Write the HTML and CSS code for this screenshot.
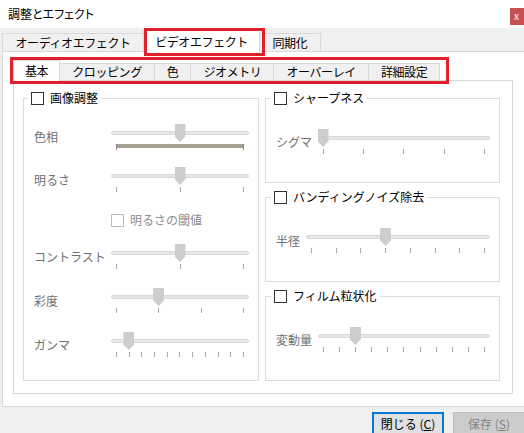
FILE: index.html
```html
<!DOCTYPE html>
<html lang="ja">
<head>
<meta charset="utf-8">
<title>調整とエフェクト</title>
<link rel="stylesheet" href="styles.css">
</head>
<body>
<div class="window">
  <div class="titlebar">
    <span class="title">調整とエフェクト</span>
    <span class="close">x</span>
  </div>

  <div class="tabs outer-tabs">
    <div class="tab">オーディオエフェクト</div>
    <div class="tab active">ビデオエフェクト</div>
    <div class="tab">同期化</div>
  </div>

  <div class="outer-pane">
    <div class="tabs inner-tabs">
      <div class="tab active">基本</div>
      <div class="tab">クロッピング</div>
      <div class="tab">色</div>
      <div class="tab">ジオメトリ</div>
      <div class="tab">オーバーレイ</div>
      <div class="tab">詳細設定</div>
    </div>

    <div class="inner-pane">
      <fieldset class="group group-left">
        <legend><span class="cb"></span>画像調整</legend>

        <div class="row">
          <span class="label">色相</span>
          <div class="slider">
            <div class="track"></div>
            <div class="hue-bar"></div>
            <div class="thumb" style="--v:0.5"></div>
          </div>
        </div>

        <div class="row">
          <span class="label">明るさ</span>
          <div class="slider">
            <div class="track"></div>
            <div class="ticks"><i></i><i></i><i></i></div>
            <div class="thumb" style="--v:0.5"></div>
          </div>
        </div>

        <div class="cb-row">
          <span class="cb disabled"></span>
          <span class="cb-text">明るさの閾値</span>
        </div>

        <div class="row">
          <span class="label">コントラスト</span>
          <div class="slider">
            <div class="track"></div>
            <div class="ticks"><i></i><i></i><i></i></div>
            <div class="thumb" style="--v:0.5"></div>
          </div>
        </div>

        <div class="row late">
          <span class="label">彩度</span>
          <div class="slider">
            <div class="track"></div>
            <div class="ticks"><i></i><i></i><i></i><i></i></div>
            <div class="thumb" style="--v:0.3333"></div>
          </div>
        </div>

        <div class="row late">
          <span class="label">ガンマ</span>
          <div class="slider">
            <div class="track"></div>
            <div class="ticks"><i></i><i></i><i></i><i></i><i></i><i></i><i></i><i></i><i></i><i></i><i></i></div>
            <div class="thumb" style="--v:0.1"></div>
          </div>
        </div>
      </fieldset>

      <div class="col-right">
        <fieldset class="group group-right">
          <legend><span class="cb"></span>シャープネス</legend>
          <div class="row">
            <span class="label">シグマ</span>
            <div class="slider">
              <div class="track"></div>
              <div class="ticks"><i></i><i></i><i></i><i></i><i></i></div>
              <div class="thumb" style="--v:0"></div>
            </div>
          </div>
        </fieldset>

        <fieldset class="group group-right">
          <legend><span class="cb"></span>バンディングノイズ除去</legend>
          <div class="row">
            <span class="label">半径</span>
            <div class="slider">
              <div class="track"></div>
              <div class="ticks"><i></i><i></i><i></i><i></i><i></i><i></i><i></i><i></i></div>
              <div class="thumb" style="--v:0.4286"></div>
            </div>
          </div>
        </fieldset>

        <fieldset class="group group-right">
          <legend><span class="cb"></span>フィルム粒状化</legend>
          <div class="row">
            <span class="label">変動量</span>
            <div class="slider">
              <div class="track"></div>
              <div class="ticks"><i></i><i></i><i></i><i></i><i></i><i></i><i></i><i></i><i></i><i></i><i></i></div>
              <div class="thumb" style="--v:0.2"></div>
            </div>
          </div>
        </fieldset>
      </div>
    </div>
  </div>

  <div class="buttons">
    <button class="btn default">閉じる (<u>C</u>)</button>
    <button class="btn disabled">保存 (<u>S</u>)</button>
  </div>

  <div class="mark mark-outer"></div>
  <div class="mark mark-inner"></div>
</div>
</body>
</html>
```

FILE: styles.css
```css
html, body {
  margin: 0;
  padding: 0;
  width: 524px;
  height: 433px;
  overflow: hidden;
  background: #f0f0f0;
}

body {
  font-family: "Noto Sans CJK JP", "Noto Sans", sans-serif;
  font-size: 12px;
  line-height: 16px;
  color: #000;
}

.window {
  position: relative;
  width: 524px;
  height: 433px;
  overflow: hidden;
}

/* title bar */
.titlebar {
  height: 28px;
  background: #fff;
  display: flex;
  align-items: flex-start;
  padding-left: 8px;
}

.title {
  margin-top: 6px;
  font-feature-settings: "palt";
}

.close {
  margin-left: auto;
  margin-top: 8px;
  width: 14px;
  height: 17px;
  background: #c75050;
  color: #fff;
  font-size: 10px;
  line-height: 16px;
  padding-left: 4px;
  box-sizing: border-box;
  overflow: hidden;
}

/* tabs */
.tabs {
  display: flex;
  align-items: flex-end;
  position: relative;
  z-index: 1;
}

.tab {
  box-sizing: border-box;
  border: 1px solid #d9d9d9;
  border-bottom: none;
  background: #f0f0f0;
  padding: 0 12px;
  display: flex;
  align-items: center;
  justify-content: center;
  white-space: nowrap;
  letter-spacing: -0.4px;
  margin-left: -1px;
}

.tab:first-child {
  margin-left: 0;
}

.tab.active {
  background: #fff;
  position: relative;
  z-index: 2;
}

.outer-tabs {
  height: 23px;
  padding-left: 2px;
}

.outer-tabs .tab {
  height: 18px;
  padding: 0 12.5px;
}

.outer-tabs .tab.active {
  height: 22px;
  padding: 0 11px;
  margin: 0 0 -1px -1px;
}

.outer-tabs .tab:last-child {
  padding: 0 12.5px;
}

.outer-pane {
  margin-left: 2px;
  width: 560px;
  height: 356px;
  box-sizing: border-box;
  border: 1px solid #d9d9d9;
  background: #fff;
  padding: 0 0 12px 10px;
}

.inner-tabs {
  height: 28px;
  padding-left: 2px;
}

.inner-tabs .tab {
  height: 17px;
}

.inner-tabs .tab.active {
  height: 21px;
  padding: 0 11px;
  margin: 0 0 -1px -2px;
}

.inner-pane {
  width: 500px;
  height: 314px;
  box-sizing: border-box;
  border: 1px solid #d9d9d9;
  padding: 9px 12px 12px 9px;
  display: flex;
  gap: 6px;
}

/* group boxes */
.group {
  margin: 0;
  min-width: 0;
  box-sizing: border-box;
  border: 1px solid #dcdcdc;
  padding: 0 9px 0 10px;
}

.group legend {
  display: flex;
  align-items: center;
  height: 16px;
  padding: 0 3px;
  margin-left: -6px;
  white-space: nowrap;
}

.group-left {
  width: 236px;
  display: flex;
  flex-direction: column;
  padding-top: 18px;
}

.group-left .row + .row,
.group-left .cb-row,
.group-left .cb-row + .row {
  margin-top: 17px;
}

.group-left .row.late {
  margin-top: 18px;
}

.col-right {
  width: 235px;
  display: flex;
  flex-direction: column;
  gap: 6px;
}

.group-right {
  flex: 1;
  padding-top: 23px;
}

.group-right legend {
  margin-left: -5px;
}

/* checkboxes */
.cb {
  display: inline-block;
  width: 13px;
  height: 13px;
  box-sizing: border-box;
  border: 1px solid #333;
  background: #fff;
  margin-right: 6px;
  flex: none;
}

.cb.disabled {
  border-color: #bcbcbc;
}

.cb-row {
  height: 17px;
  display: flex;
  align-items: flex-end;
  padding-left: 77px;
}

.cb-text {
  color: #8d8d8d;
  line-height: 14px;
}

/* slider rows */
.row {
  display: flex;
  align-items: center;
  height: 26px;
}

.label {
  color: #707070;
  white-space: nowrap;
}

.group-left .label {
  width: 77px;
  flex: none;
}

.group-right .label {
  margin-right: 6px;
}

.slider {
  position: relative;
  height: 26px;
  flex: 1;
}

.group-left .slider {
  flex: none;
  width: 138px;
}

.track {
  position: absolute;
  left: 0;
  right: 0;
  top: 7px;
  height: 4px;
  box-sizing: border-box;
  background: #e7e7e7;
  border: 1px solid #d9d9d9;
  border-radius: 2px;
}

.thumb {
  position: absolute;
  top: 0;
  left: calc(var(--v) * (100% - 10px) - 0.5px);
  width: 11px;
  height: 18px;
  background: #cdcdcd;
  clip-path: polygon(0 0, 100% 0, 100% 68%, 50% 100%, 0 68%);
}

.ticks {
  position: absolute;
  left: 5px;
  right: 5px;
  top: 20px;
  height: 5px;
  display: flex;
  justify-content: space-between;
}

.ticks i {
  display: block;
  width: 1px;
  height: 5px;
  background: #a8a8a8;
}

.hue-bar {
  position: absolute;
  left: 5px;
  right: 5px;
  top: 20px;
  height: 4px;
  background: #a5a294;
}

.hue-bar::before,
.hue-bar::after {
  content: "";
  position: absolute;
  top: 0;
  width: 1px;
  height: 6px;
  background: #8c8a80;
}

.hue-bar::before { left: 0; }
.hue-bar::after { right: 0; }

/* bottom buttons */
.buttons {
  height: 26px;
  display: flex;
  align-items: flex-start;
  padding-top: 5px;
  padding-left: 372px;
  gap: 9px;
  box-sizing: border-box;
}

.btn {
  flex: none;
  width: 72px;
  height: 23px;
  font: inherit;
  font-size: 12px;
  line-height: 16px;
  padding: 0;
  box-sizing: border-box;
  border: 1px solid #adadad;
  background: #e1e1e1;
  color: #000;
}

.btn.default {
  border: 2px solid #0078d7;
}

.btn.disabled {
  background: #cccccc;
  border-color: #bfbfbf;
  color: #838383;
}

/* red annotation boxes */
.mark {
  position: absolute;
  border: 3px solid #e0202a;
  box-sizing: border-box;
  z-index: 5;
}

.mark-outer {
  left: 144px;
  top: 28px;
  width: 121px;
  height: 28px;
}

.mark-inner {
  left: 10px;
  top: 57px;
  width: 439px;
  height: 27px;
}
```
